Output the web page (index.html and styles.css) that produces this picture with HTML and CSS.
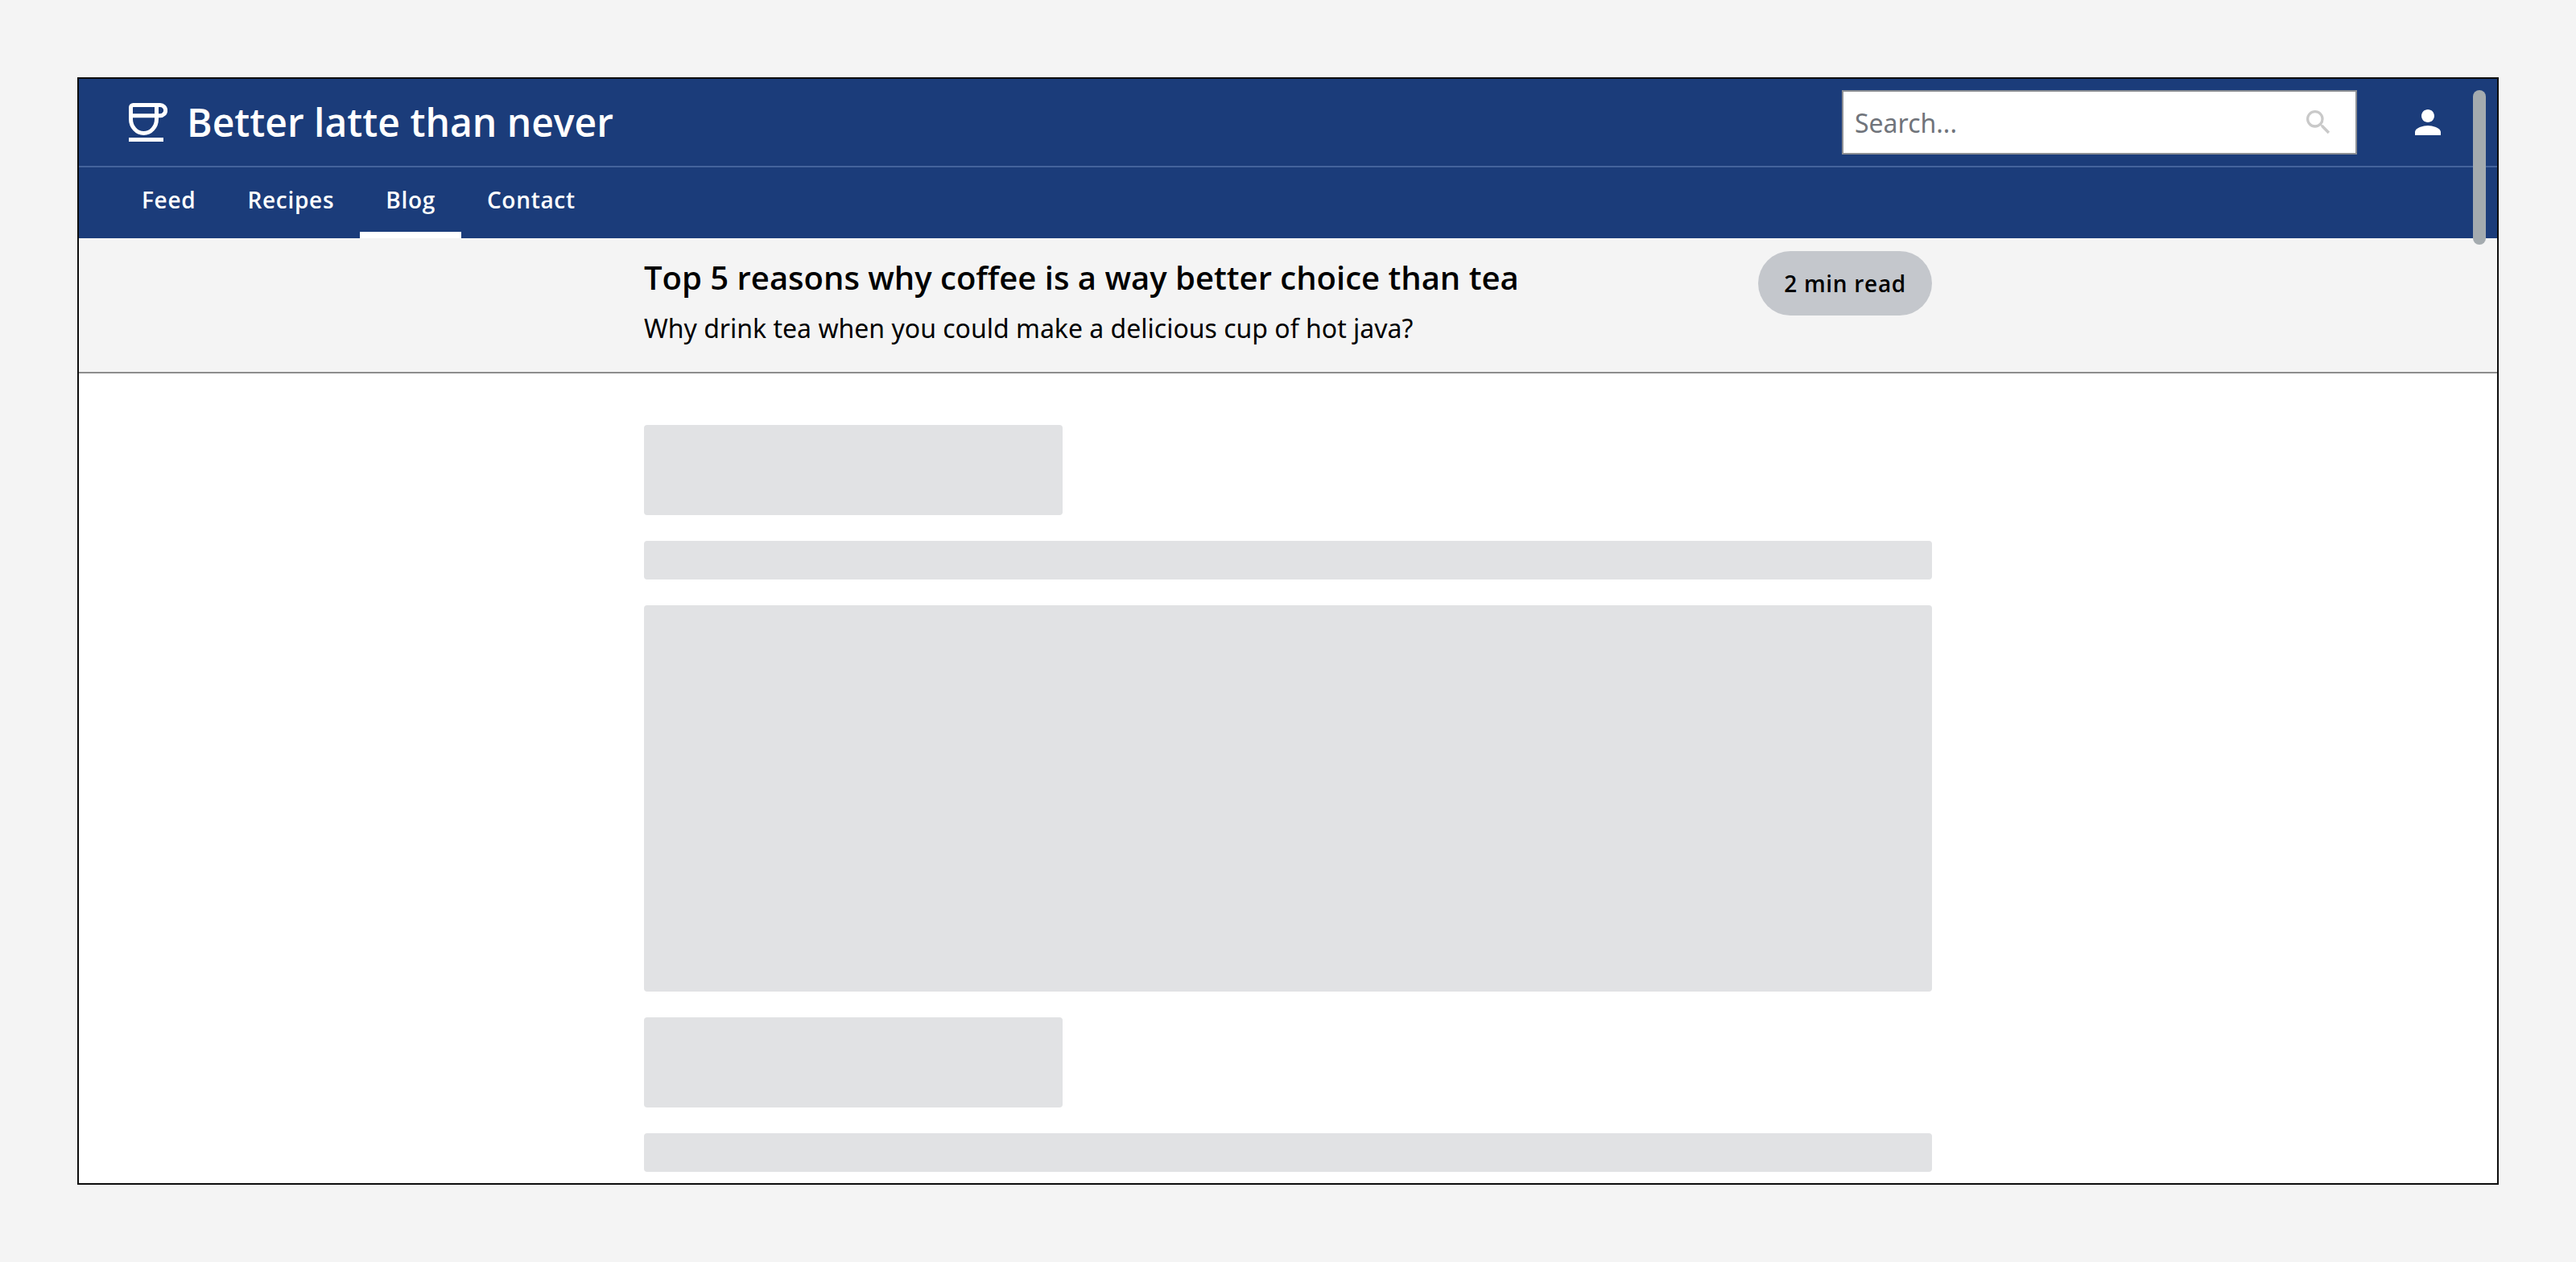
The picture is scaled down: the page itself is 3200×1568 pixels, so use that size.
FILE: index.html
```html
<!DOCTYPE html>
<html lang="en">
<head>
<meta charset="utf-8">
<title>Better latte than never</title>
<link rel="stylesheet" href="styles.css">
</head>
<body>
<div class="app">
  <header class="header">
    <div class="header-top">
      <a class="brand" href="#">
        <svg class="brand-icon" viewBox="0 0 48 48" fill="none" stroke="currentColor" stroke-width="5" aria-hidden="true">
          <path d="M2.5 5.500a3 3 0 0 1 3-3H39a6.500 6.500 0 0 1 0 13.300H2.500M2.500 5.500V20a16 17.500 0 0 0 32 0V2.500M0 45.400H43"/>
        </svg>
        <span>Better latte than never</span>
      </a>
      <div class="tools">
        <form class="search" role="search">
          <input class="search-input" type="search" placeholder="Search..." aria-label="Search">
          <svg class="search-icon" viewBox="0 0 24 24" fill="currentColor" aria-hidden="true">
            <path d="M15.500 14h-.79l-.28-.27A6.471 6.471 0 0 0 16 9.500 6.500 6.500 0 1 0 9.500 16c1.610 0 3.090-.59 4.230-1.570l.27.28v.79l5 4.990L20.490 19l-4.990-5zm-6 0C7.010 14 5 11.990 5 9.500S7.010 5 9.500 5 14 7.010 14 9.500 11.990 14 9.500 14z"/>
          </svg>
        </form>
        <button class="user" type="button" aria-label="Account">
          <svg viewBox="0 0 24 24" fill="currentColor" aria-hidden="true">
            <path d="M12 12c2.210 0 4-1.790 4-4s-1.790-4-4-4-4 1.790-4 4 1.790 4 4 4zm0 2c-2.670 0-8 1.340-8 4v2h16v-2c0-2.660-5.330-4-8-4z"/>
          </svg>
        </button>
      </div>
    </div>
    <nav class="nav" aria-label="Main">
      <a class="nav-link" href="#">Feed</a>
      <a class="nav-link" href="#">Recipes</a>
      <a class="nav-link nav-link-active" href="#" aria-current="page">Blog</a>
      <a class="nav-link" href="#">Contact</a>
    </nav>
  </header>
  <section class="intro">
    <div class="column intro-row">
      <div>
        <h1 class="title">Top 5 reasons why coffee is a way better choice than tea</h1>
        <p class="subtitle">Why drink tea when you could make a delicious cup of hot java?</p>
      </div>
      <span class="pill">2 min read</span>
    </div>
  </section>
  <main class="column content" aria-busy="true">
    <div class="bone bone-heading"></div>
    <div class="bone bone-line"></div>
    <div class="bone bone-media"></div>
    <div class="bone bone-heading"></div>
    <div class="bone bone-line"></div>
  </main>
  <div class="scroll-thumb"></div>
</div>
</body>
</html>
```
FILE: styles.css
```css
* {
  box-sizing: border-box;
}

body {
  margin: 0;
  padding: 96px;
  background: #f4f4f4;
  color: #000;
  font-family: "Open Sans", "Noto Sans", sans-serif;
}

.app {
  position: relative;
  min-height: calc(100vh - 192px);
  border: 2px solid #0d0d0d;
  background: #fff;
}

.header {
  background: #1b3c7a;
  color: #fff;
}

.header-top {
  display: flex;
  align-items: center;
  justify-content: space-between;
  padding: 14px 62px;
  border-bottom: 2px solid #44639c;
}

.brand {
  display: flex;
  align-items: center;
  gap: 24px;
  color: inherit;
  font-size: 48px;
  font-weight: 600;
  line-height: 64px;
  text-decoration: none;
}

.brand-icon {
  width: 48px;
  height: 48px;
}

.tools {
  display: flex;
  align-items: center;
  gap: 64px;
}

.search {
  position: relative;
  width: 640px;
}

.search-input {
  display: block;
  width: 100%;
  height: 80px;
  padding: 0 80px 0 14px;
  border: 2px solid #8c8f94;
  border-radius: 0;
  background: #fff;
  color: #000;
  font: 400 32px/48px "Noto Sans", "Open Sans", sans-serif;
  appearance: none;
}

.search-input::placeholder {
  color: #70747b;
  opacity: 1;
}

.search-icon {
  position: absolute;
  top: 20px;
  right: 28px;
  width: 40px;
  height: 40px;
  color: #c9c9c9;
}

.user {
  width: 48px;
  height: 48px;
  padding: 0;
  border: 0;
  background: none;
  color: inherit;
}

.user svg {
  display: block;
}

.nav {
  display: flex;
  padding: 0 46px;
}

.nav-link {
  padding: 20px 32px;
  border-bottom: 8px solid transparent;
  color: inherit;
  font-size: 28px;
  font-weight: 600;
  line-height: 40px;
  letter-spacing: 0.025em;
  text-decoration: none;
}

.nav-link-active {
  border-bottom-color: #fff;
}

.column {
  width: 100%;
  max-width: 1600px;
  margin: 0 auto;
}

.intro {
  padding: 16px 0 30px;
  border-bottom: 2px solid #8d8d8d;
  background: #f4f4f4;
}

.intro-row {
  display: flex;
  align-items: flex-start;
  justify-content: space-between;
}

.title {
  margin: 0;
  font-size: 40px;
  font-weight: 600;
  line-height: 66px;
}

.subtitle {
  margin: 6px 0 0;
  font-family: "Noto Sans", "Open Sans", sans-serif;
  font-size: 32px;
  line-height: 48px;
}

.pill {
  padding: 20px 32px;
  border-radius: 40px;
  background: #c4c7cc;
  font-size: 28px;
  font-weight: 600;
  line-height: 40px;
  letter-spacing: 0.025em;
}

.content {
  display: flex;
  flex-direction: column;
  gap: 32px;
  padding: 64px 0 14px;
}

.bone {
  border-radius: 4px;
  background: #e1e2e4;
}

.bone-heading {
  width: 520px;
  height: 112px;
}

.bone-line {
  height: 48px;
}

.bone-media {
  height: 480px;
}

.scroll-thumb {
  position: absolute;
  top: 14px;
  right: 14px;
  width: 16px;
  height: 192px;
  border-radius: 8px;
  background: #a4abaf;
}
```
